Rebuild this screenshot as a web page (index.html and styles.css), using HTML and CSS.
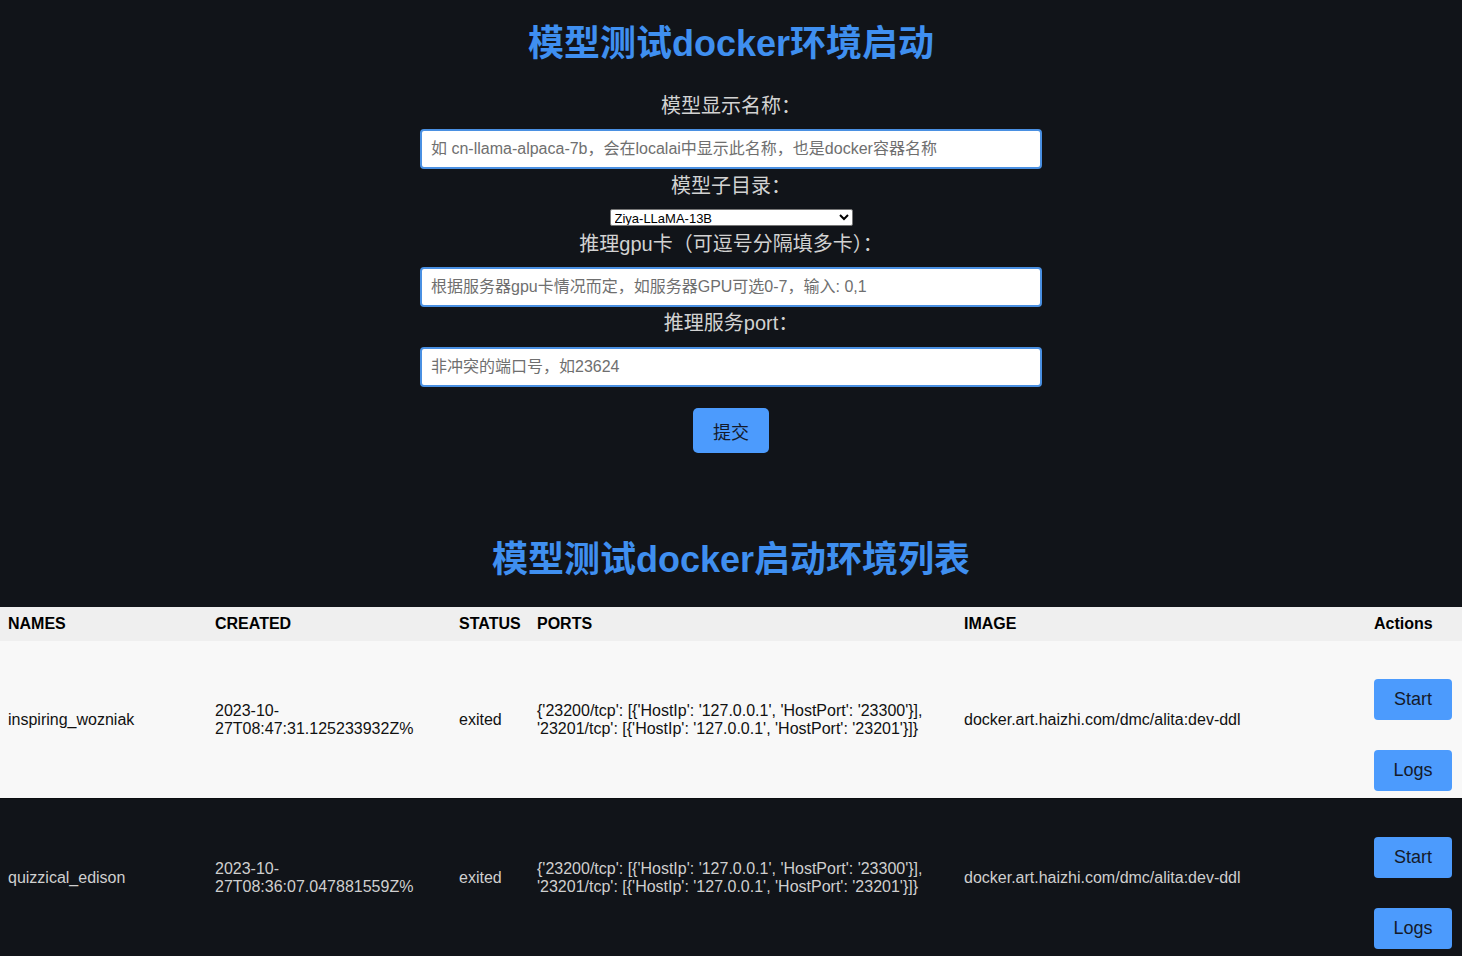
FILE: index.html
```html
<!DOCTYPE html>
<html lang="zh">
<head>
<meta charset="utf-8">
<title>模型测试docker环境启动</title>
<link rel="stylesheet" href="styles.css">
</head>
<body>
<h1 class="title title-top">模型测试docker环境启动</h1>
<form class="launch-form">
  <label class="field-label label-first" for="name">模型显示名称：</label>
  <input class="field-input" id="name" type="text" placeholder="如 cn-llama-alpaca-7b，会在localai中显示此名称，也是docker容器名称">
  <label class="field-label" for="dir">模型子目录：</label>
  <select class="field-select" id="dir">
    <option>Ziya-LLaMA-13B</option>
  </select>
  <label class="field-label label-after-select" for="gpu">推理gpu卡（可逗号分隔填多卡）：</label>
  <input class="field-input" id="gpu" type="text" placeholder="根据服务器gpu卡情况而定，如服务器GPU可选0-7，输入: 0,1">
  <label class="field-label label-port" for="port">推理服务port：</label>
  <input class="field-input" id="port" type="text" placeholder="非冲突的端口号，如23624">
  <button class="btn submit-btn" type="button">提交</button>
</form>
<h1 class="title title-list">模型测试docker启动环境列表</h1>
<table class="env-table">
  <thead>
    <tr>
      <th class="col-name">NAMES</th>
      <th class="col-created">CREATED</th>
      <th class="col-status">STATUS</th>
      <th class="col-ports">PORTS</th>
      <th class="col-image">IMAGE</th>
      <th class="col-actions">Actions</th>
    </tr>
  </thead>
  <tbody>
    <tr class="row-light">
      <td>inspiring_wozniak</td>
      <td>2023-10-27T08:47:31.125233932Z%</td>
      <td>exited</td>
      <td>{'23200/tcp': [{'HostIp': '127.0.0.1', 'HostPort': '23300'}], '23201/tcp': [{'HostIp': '127.0.0.1', 'HostPort': '23201'}]}</td>
      <td>docker.art.haizhi.com/dmc/alita:dev-ddl</td>
      <td class="actions-cell"><div class="actions"><button class="btn action-btn" type="button">Start</button><button class="btn action-btn" type="button">Logs</button></div></td>
    </tr>
    <tr class="row-dark">
      <td>quizzical_edison</td>
      <td>2023-10-27T08:36:07.047881559Z%</td>
      <td>exited</td>
      <td>{'23200/tcp': [{'HostIp': '127.0.0.1', 'HostPort': '23300'}], '23201/tcp': [{'HostIp': '127.0.0.1', 'HostPort': '23201'}]}</td>
      <td>docker.art.haizhi.com/dmc/alita:dev-ddl</td>
      <td class="actions-cell"><div class="actions"><button class="btn action-btn" type="button">Start</button><button class="btn action-btn" type="button">Logs</button></div></td>
    </tr>
  </tbody>
</table>
</body>
</html>
```
FILE: styles.css
```css
* { box-sizing: border-box; }

html, body {
  margin: 0;
  padding: 0;
  background: #111419;
}

body {
  font-family: "Liberation Sans", "Noto Sans CJK SC", sans-serif;
  color: #d4d4d4;
}

.title {
  margin: 0;
  text-align: center;
  color: #3f8ff0;
  font-size: 36px;
  font-weight: 700;
  line-height: 42px;
}

.title-top { padding-top: 23px; }

.title-list { margin-top: 86px; }

.launch-form {
  width: 622px;
  margin: 0 auto;
  display: flex;
  flex-direction: column;
  align-items: center;
}

.field-label {
  display: block;
  font-size: 20px;
  line-height: 26px;
  color: #d2d2d2;
  text-align: center;
  margin: 4px 0 10px;
}

.field-label.label-first { margin: 28px 0 10px; }

.field-label.label-after-select { margin: 5px 0 10px; }

.field-label.label-port { margin: 3px 0 11px; }

.field-input {
  width: 622px;
  height: 40px;
  border: 2px solid #4a90e2;
  border-radius: 4px;
  background: #ffffff;
  padding: 0 9px;
  font-family: "Liberation Sans", "Noto Sans CJK SC", sans-serif;
  font-size: 16px;
  color: #222;
}

.field-input::placeholder { color: #6f6f6f; }

.field-select {
  width: 243px;
  height: 17px;
  font-family: "Liberation Sans", "Noto Sans CJK SC", sans-serif;
  font-size: 13px;
  padding: 0;
  border: 1px solid #767676;
  border-radius: 2px;
  background: #fff;
  color: #000;
}

.btn {
  border: none;
  background: #4c9bfd;
  color: #141a2a;
  font-family: "Liberation Sans", "Noto Sans CJK SC", sans-serif;
  cursor: pointer;
}

.submit-btn {
  margin-top: 21px;
  width: 76px;
  height: 45px;
  border-radius: 5px;
  font-size: 18px;
}

.env-table {
  margin-top: 26px;
  width: 100%;
  border-collapse: collapse;
  table-layout: fixed;
  font-size: 16px;
  line-height: 18px;
}

.env-table th {
  background: #efefef;
  color: #000;
  font-weight: 700;
  text-align: left;
  height: 34px;
  padding: 0 8px;
}

.env-table td {
  padding: 8px;
  vertical-align: middle;
}

.col-name { width: 207px; }
.col-created { width: 244px; }
.col-status { width: 78px; }
.col-ports { width: 427px; }
.col-image { width: 410px; }
.col-actions { width: 96px; }

.row-light td {
  background: #f8f8f8;
  color: #111;
}

.row-light { border-bottom: 1px solid #0b0d10; }

.row-dark td {
  color: #cfcfcf;
}

.env-table td.actions-cell { padding: 8px 8px 7px; }

.actions {
  display: flex;
  flex-direction: column;
  gap: 30px;
  padding-top: 30px;
}

.action-btn {
  width: 78px;
  height: 41px;
  border-radius: 4px;
  font-size: 18px;
}
```
